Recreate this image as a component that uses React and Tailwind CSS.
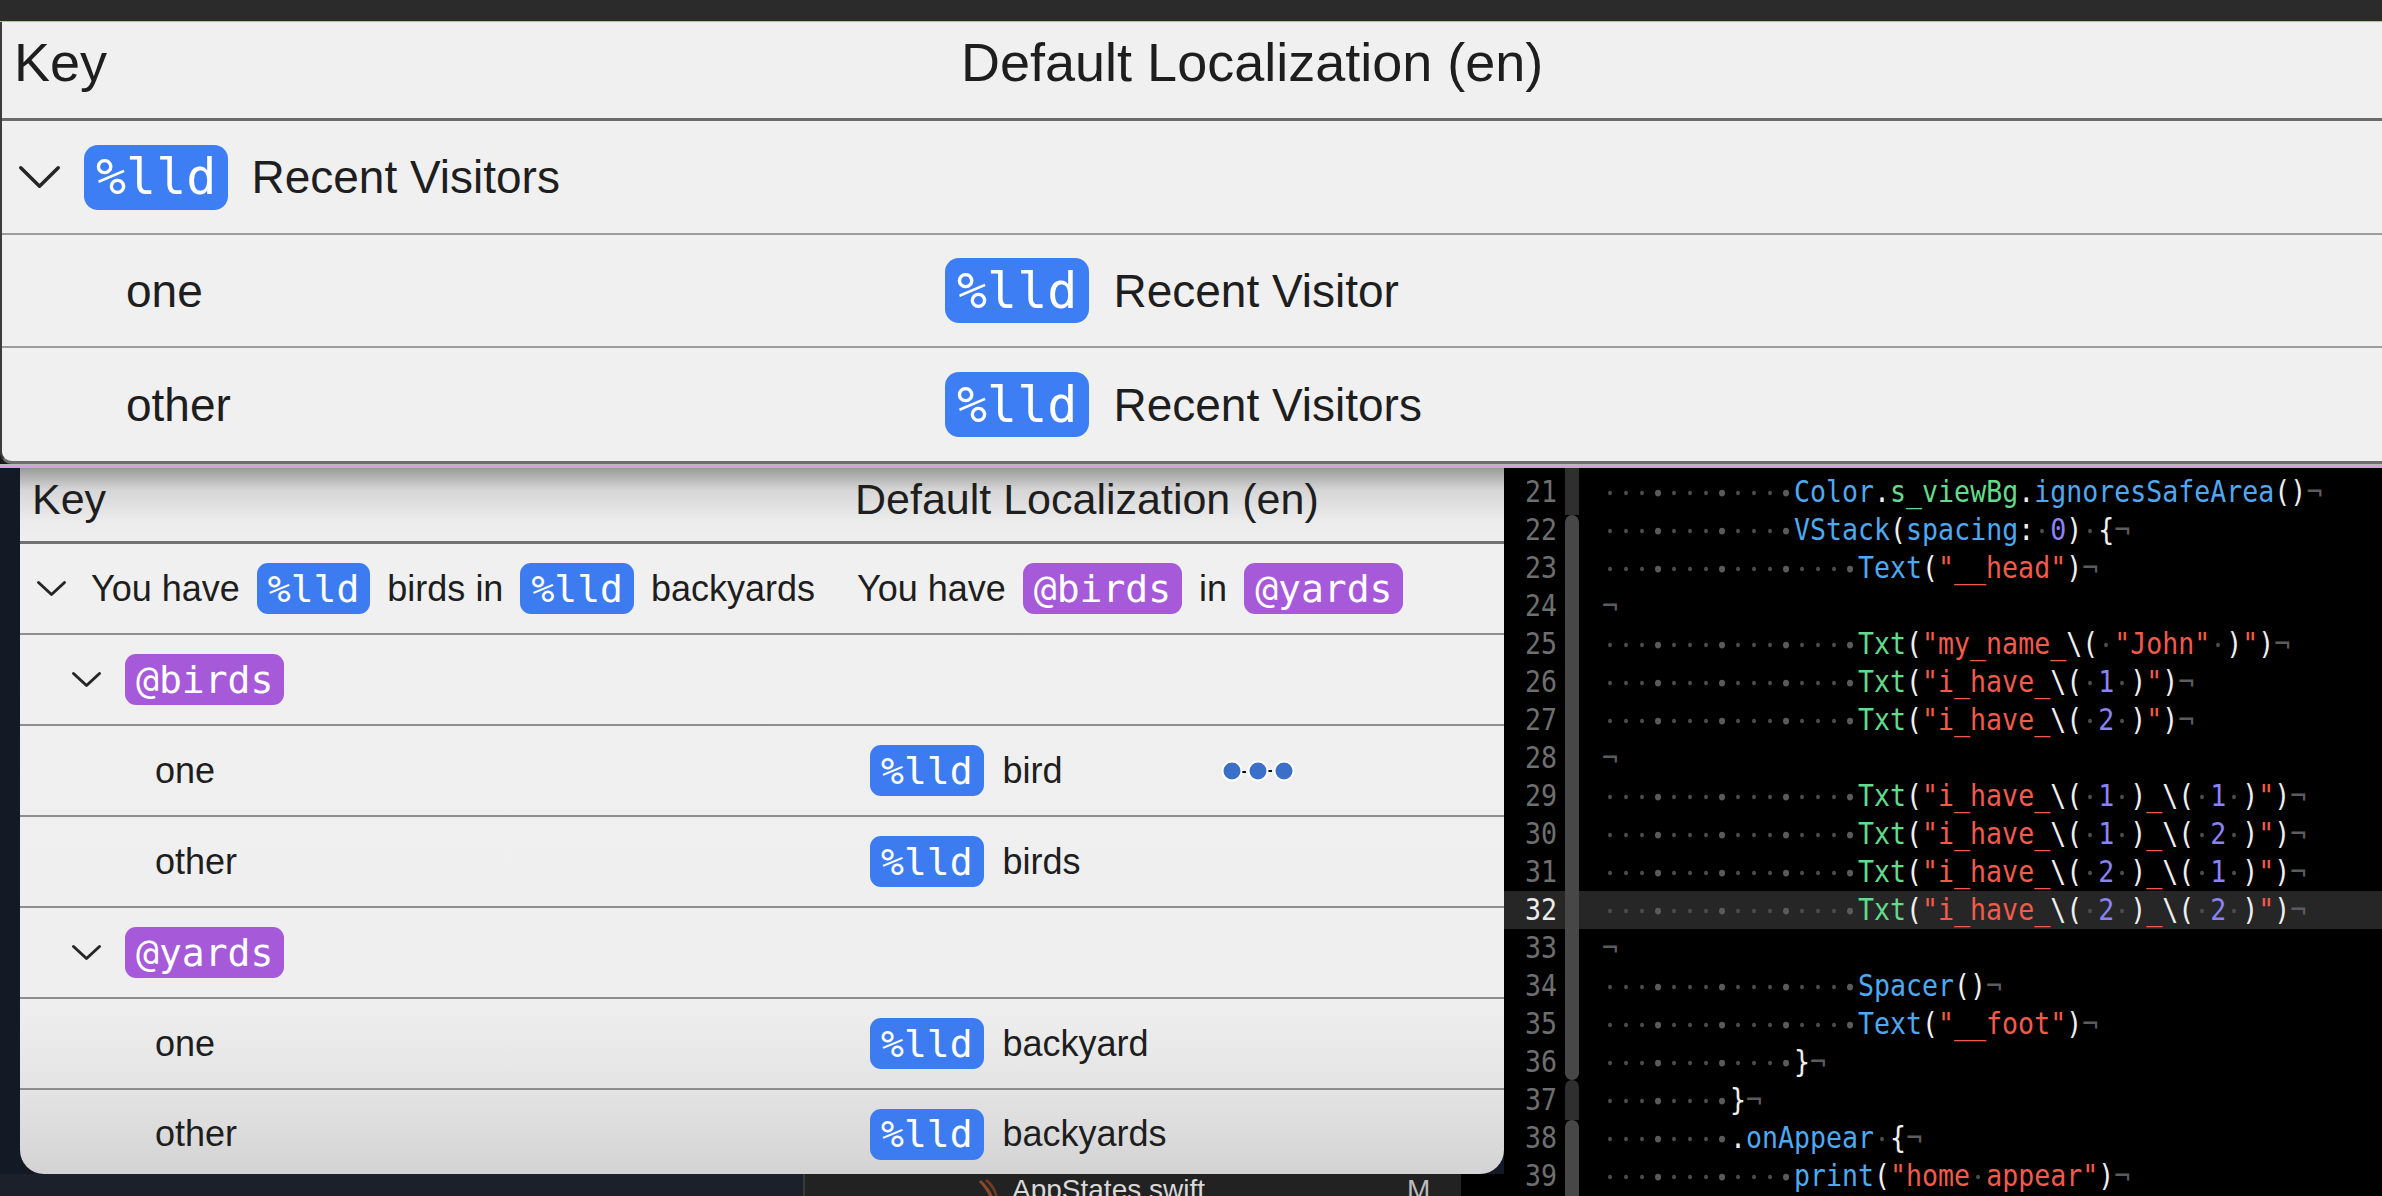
import React from 'react';

const SANS = "font-['Liberation_Sans',Arial,sans-serif]";
const MONO = "font-['DejaVu_Sans_Mono',monospace]";

const TONE = {
  b: 'text-[#4fa9f1]',
  g: 'text-[#63db8c]',
  r: 'text-[#f25b4c]',
  p: 'text-[#8b82f6]',
  w: 'text-[#efefef]',
};

const code = [
  [21, 12, [['b', 'Color'], ['w', '.'], ['g', 's_viewBg'], ['w', '.'], ['b', 'ignoresSafeArea'], ['w', '()']]],
  [22, 12, [['b', 'VStack'], ['w', '('], ['b', 'spacing'], ['w', ': '], ['p', '0'], ['w', ') {']]],
  [23, 16, [['b', 'Text'], ['w', '('], ['r', '"__head"'], ['w', ')']]],
  [24, 0, []],
  [25, 16, [['g', 'Txt'], ['w', '('], ['r', '"my_name_'], ['w', '\\( '], ['r', '"John"'], ['w', ' )'], ['r', '"'], ['w', ')']]],
  [26, 16, [['g', 'Txt'], ['w', '('], ['r', '"i_have_'], ['w', '\\( '], ['p', '1'], ['w', ' )'], ['r', '"'], ['w', ')']]],
  [27, 16, [['g', 'Txt'], ['w', '('], ['r', '"i_have_'], ['w', '\\( '], ['p', '2'], ['w', ' )'], ['r', '"'], ['w', ')']]],
  [28, 0, []],
  [29, 16, [['g', 'Txt'], ['w', '('], ['r', '"i_have_'], ['w', '\\( '], ['p', '1'], ['w', ' )'], ['r', '_'], ['w', '\\( '], ['p', '1'], ['w', ' )'], ['r', '"'], ['w', ')']]],
  [30, 16, [['g', 'Txt'], ['w', '('], ['r', '"i_have_'], ['w', '\\( '], ['p', '1'], ['w', ' )'], ['r', '_'], ['w', '\\( '], ['p', '2'], ['w', ' )'], ['r', '"'], ['w', ')']]],
  [31, 16, [['g', 'Txt'], ['w', '('], ['r', '"i_have_'], ['w', '\\( '], ['p', '2'], ['w', ' )'], ['r', '_'], ['w', '\\( '], ['p', '1'], ['w', ' )'], ['r', '"'], ['w', ')']]],
  [32, 16, [['g', 'Txt'], ['w', '('], ['r', '"i_have_'], ['w', '\\( '], ['p', '2'], ['w', ' )'], ['r', '_'], ['w', '\\( '], ['p', '2'], ['w', ' )'], ['r', '"'], ['w', ')']]],
  [33, 0, []],
  [34, 16, [['b', 'Spacer'], ['w', '()']]],
  [35, 16, [['b', 'Text'], ['w', '('], ['r', '"__foot"'], ['w', ')']]],
  [36, 12, [['w', '}']]],
  [37, 8, [['w', '}']]],
  [38, 8, [['w', '.'], ['b', 'onAppear'], ['w', ' {']]],
  [39, 12, [['b', 'print'], ['w', '('], ['r', '"home appear"'], ['w', ')']]],
];

const CURRENT = 32;

const Chevron = ({ w, h, sw }) => (
  <svg width={w} height={h} viewBox={`0 0 ${w} ${h}`} fill="none" className="shrink-0">
    <path
      d={`M${sw / 2 + 1} ${sw / 2 + 1} L${w / 2} ${h - sw / 2 - 1} L${w - sw / 2 - 1} ${sw / 2 + 1}`}
      stroke="#262626"
      strokeWidth={sw}
      strokeLinecap="round"
      strokeLinejoin="round"
    />
  </svg>
);

const BigBadge = ({ children }) => (
  <span className={`inline-flex items-center h-[65px] px-[12px] rounded-[14px] bg-[#3d7ef4] text-white text-[50px] leading-none ${MONO}`}>
    {children}
  </span>
);

const Badge = ({ children, purple }) => (
  <span
    className={`inline-flex items-center shrink-0 h-[51px] px-[11px] rounded-[11px] text-white text-[38px] leading-none ${MONO} ${
      purple ? 'bg-[#a65ada]' : 'bg-[#3d7cf0]'
    }`}
  >
    {children}
  </span>
);

const Dot = ({ big }) => (
  <span className="flex w-[1ch] justify-center pt-[2px]">
    <span className={big ? 'w-[6px] h-[6px] rounded-full bg-[#5b5b5b]' : 'w-[4px] h-[4px] rounded-full bg-[#4b4b4b]'} />
  </span>
);

function CodeLine({ ind, seg }) {
  const items = [];
  for (let i = 0; i < ind; i++) items.push(<Dot key={'i' + i} big={i % 4 === 3} />);
  seg.forEach(([tone, text], si) => {
    text.split(/( )/).forEach((part, pi) => {
      if (part === ' ') items.push(<Dot key={`s${si}-${pi}`} />);
      else if (part) items.push(<span key={`t${si}-${pi}`} className={TONE[tone]}>{part}</span>);
    });
  });
  items.push(<span key="eol" className="text-[#5c5c5c]">¬</span>);
  return <div className="flex items-center whitespace-pre scale-y-[1.12]">{items}</div>;
}

function TopPanel() {
  return (
    <div className={`bg-[#f0f0f1] border-l-[2px] border-l-[#3c3c3c] border-b-[3px] border-b-[#6e6e6e] rounded-bl-[12px] text-[#1e1e1e] ${SANS}`}>
      <div className="h-[99px] flex items-center pl-[12px] pb-[16px] text-[54px] leading-none border-b-[3px] border-[#6c6c6c]">
        <div className="w-[947px]">Key</div>
        <div>Default Localization (en)</div>
      </div>
      <div className="h-[114px] flex items-center pl-[16px] gap-[23px] text-[46px] leading-none border-b-[2px] border-[#9d9d9d]">
        <Chevron w={43} h={24} sw={3.5} />
        <BigBadge>%lld</BigBadge>
        <span>Recent Visitors</span>
      </div>
      <div className="h-[113px] flex items-center pl-[124px] text-[46px] leading-none border-b-[2px] border-[#9d9d9d]">
        <div className="w-[819px]">one</div>
        <div className="flex items-center gap-[24px]">
          <BigBadge>%lld</BigBadge>
          <span>Recent Visitor</span>
        </div>
      </div>
      <div className="h-[113px] flex items-center pl-[124px] text-[46px] leading-none">
        <div className="w-[819px]">other</div>
        <div className="flex items-center gap-[24px]">
          <BigBadge>%lld</BigBadge>
          <span>Recent Visitors</span>
        </div>
      </div>
    </div>
  );
}

const PluralRow = ({ label, value, last, children }) => (
  <div className={`relative flex items-center pl-[135px] ${last ? 'flex-1 pt-[4px]' : 'h-[91px] border-b-[2px] border-[#8e8e8e]'}`}>
    <div className="w-[715px]">{label}</div>
    <div className="flex items-center gap-[19px]">
      <Badge>%lld</Badge>
      <span>{value}</span>
    </div>
    {children}
  </div>
);

const GroupRow = ({ name }) => (
  <div className="h-[91px] flex items-center pl-[51px] gap-[23px] border-b-[2px] border-[#8e8e8e]">
    <Chevron w={31} h={17} sw={3} />
    <Badge purple>{name}</Badge>
  </div>
);

function BottomPanel() {
  return (
    <div
      className={`ml-[20px] w-[1484px] h-[706px] flex flex-col rounded-b-[24px] overflow-hidden text-[#1e1e1e] text-[36px] leading-none ${SANS} bg-[linear-gradient(to_bottom,#9a9a9a_0px,#d6d6d6_22px,#ebebeb_52px,#f0f0f0_76px,#efefef_530px,#e4e4e4_620px,#d3d3d3_706px)]`}
    >
      <div className="h-[76px] shrink-0 flex items-center pl-[12px] pb-[10px] text-[43px] border-b-[3px] border-[#727272]">
        <div className="w-[823px]">Key</div>
        <div>Default Localization (en)</div>
      </div>
      <div className="h-[91px] shrink-0 flex items-center pl-[16px] border-b-[2px] border-[#8e8e8e]">
        <div className="w-[821px] flex items-center">
          <Chevron w={31} h={17} sw={3} />
          <div className="ml-[24px] flex items-center gap-[17px]">
            <span>You have</span>
            <Badge>%lld</Badge>
            <span>birds in</span>
            <Badge>%lld</Badge>
            <span>backyards</span>
          </div>
        </div>
        <div className="flex items-center gap-[17px]">
          <span>You have</span>
          <Badge purple>@birds</Badge>
          <span>in</span>
          <Badge purple>@yards</Badge>
        </div>
      </div>
      <GroupRow name="@birds" />
      <PluralRow label="one" value="bird">
        <svg width="76" height="24" viewBox="0 0 76 24" className="absolute left-[1200px] top-1/2 -translate-y-1/2">
          <rect x="20" y="12" width="6" height="2" fill="#111" />
          <rect x="47" y="11" width="5" height="2" fill="#111" />
          <circle cx="12" cy="12" r="9.5" fill="#3b6fc8" stroke="#fff" strokeWidth="2" />
          <circle cx="38" cy="12" r="9.5" fill="#3b6fc8" stroke="#fff" strokeWidth="2" />
          <circle cx="64" cy="12" r="9.5" fill="#3b6fc8" stroke="#fff" strokeWidth="2" />
        </svg>
      </PluralRow>
      <PluralRow label="other" value="birds" />
      <GroupRow name="@yards" />
      <PluralRow label="one" value="backyard" />
      <PluralRow label="other" value="backyards" last />
    </div>
  );
}

function TabStrip() {
  return (
    <div className={`h-[22px] flex overflow-hidden ${SANS}`}>
      <div className="w-[803px] bg-[#1c202a]" />
      <div className="w-[658px] bg-[#222222] border-l-[2px] border-[#3a3a3a] relative flex pt-[2px]">
        <svg width="28" height="28" viewBox="0 0 28 28" className="ml-[170px] mt-[2px] shrink-0">
          <path d="M6 2 C13 9 17 14 19 22 L16 24 C14 16 10 10 4 4 Z" fill="#8a4a28" />
          <path d="M12 1 C18 6 22 12 23 20 L21 22 C20 14 16 8 10 3 Z" fill="#6e3a20" />
        </svg>
        <span className="ml-[9px] text-[28px] leading-none text-[#d9d9d9]">AppStates.swift</span>
        <span className="absolute left-[602px] top-[2px] text-[28px] leading-none text-[#bcbcbc]">M</span>
      </div>
      <div className="flex-1 bg-black" />
    </div>
  );
}

function Editor() {
  return (
    <div className={`flex-1 bg-black overflow-hidden flex ${MONO} text-[26.6px] leading-none`}>
      <div className="w-[61px] pt-[5px] shrink-0">
        {code.map(([n]) => (
          <div
            key={n}
            className={`h-[38px] flex items-center justify-end pr-[8px] ${
              n === CURRENT ? 'bg-[#262626] text-[#ececec]' : 'text-[#6f6f6f]'
            }`}
          >
            <span className="scale-y-[1.12]">{n}</span>
          </div>
        ))}
      </div>
      <div className="w-[14px] shrink-0 flex flex-col">
        <div className="h-[47px] bg-[#2f2f2f]" />
        <div className="h-[565px] bg-[#474747] rounded-[7px]" />
        <div className="h-[40px] bg-[#2f2f2f] rounded-t-[7px]" />
        <div className="flex-1 bg-[#474747] rounded-t-[7px]" />
      </div>
      <div className="flex-1 pt-[5px]">
        {code.map(([n, ind, seg]) => (
          <div key={n} className={`h-[38px] flex items-center pl-[23px] ${n === CURRENT ? 'bg-[#262626]' : ''}`}>
            <CodeLine ind={ind} seg={seg} />
          </div>
        ))}
      </div>
    </div>
  );
}

export default function App() {
  return (
    <div className="w-[2382px] h-[1196px] overflow-hidden bg-[#1a1a1a] flex flex-col">
      <div className="h-[21px] shrink-0 bg-[#2b2b2b]" />
      <div className="h-[1px] shrink-0 bg-[#d9a3dc]" />
      <TopPanel />
      <div className="h-[1px] shrink-0 bg-[#b9b9b9]" />
      <div className="h-[3px] shrink-0 bg-[#d99fdd]" />
      <div className="flex-1 flex min-h-0">
        <div className="w-[1504px] shrink-0 bg-[#141926] flex flex-col">
          <BottomPanel />
          <TabStrip />
        </div>
        <Editor />
      </div>
    </div>
  );
}
